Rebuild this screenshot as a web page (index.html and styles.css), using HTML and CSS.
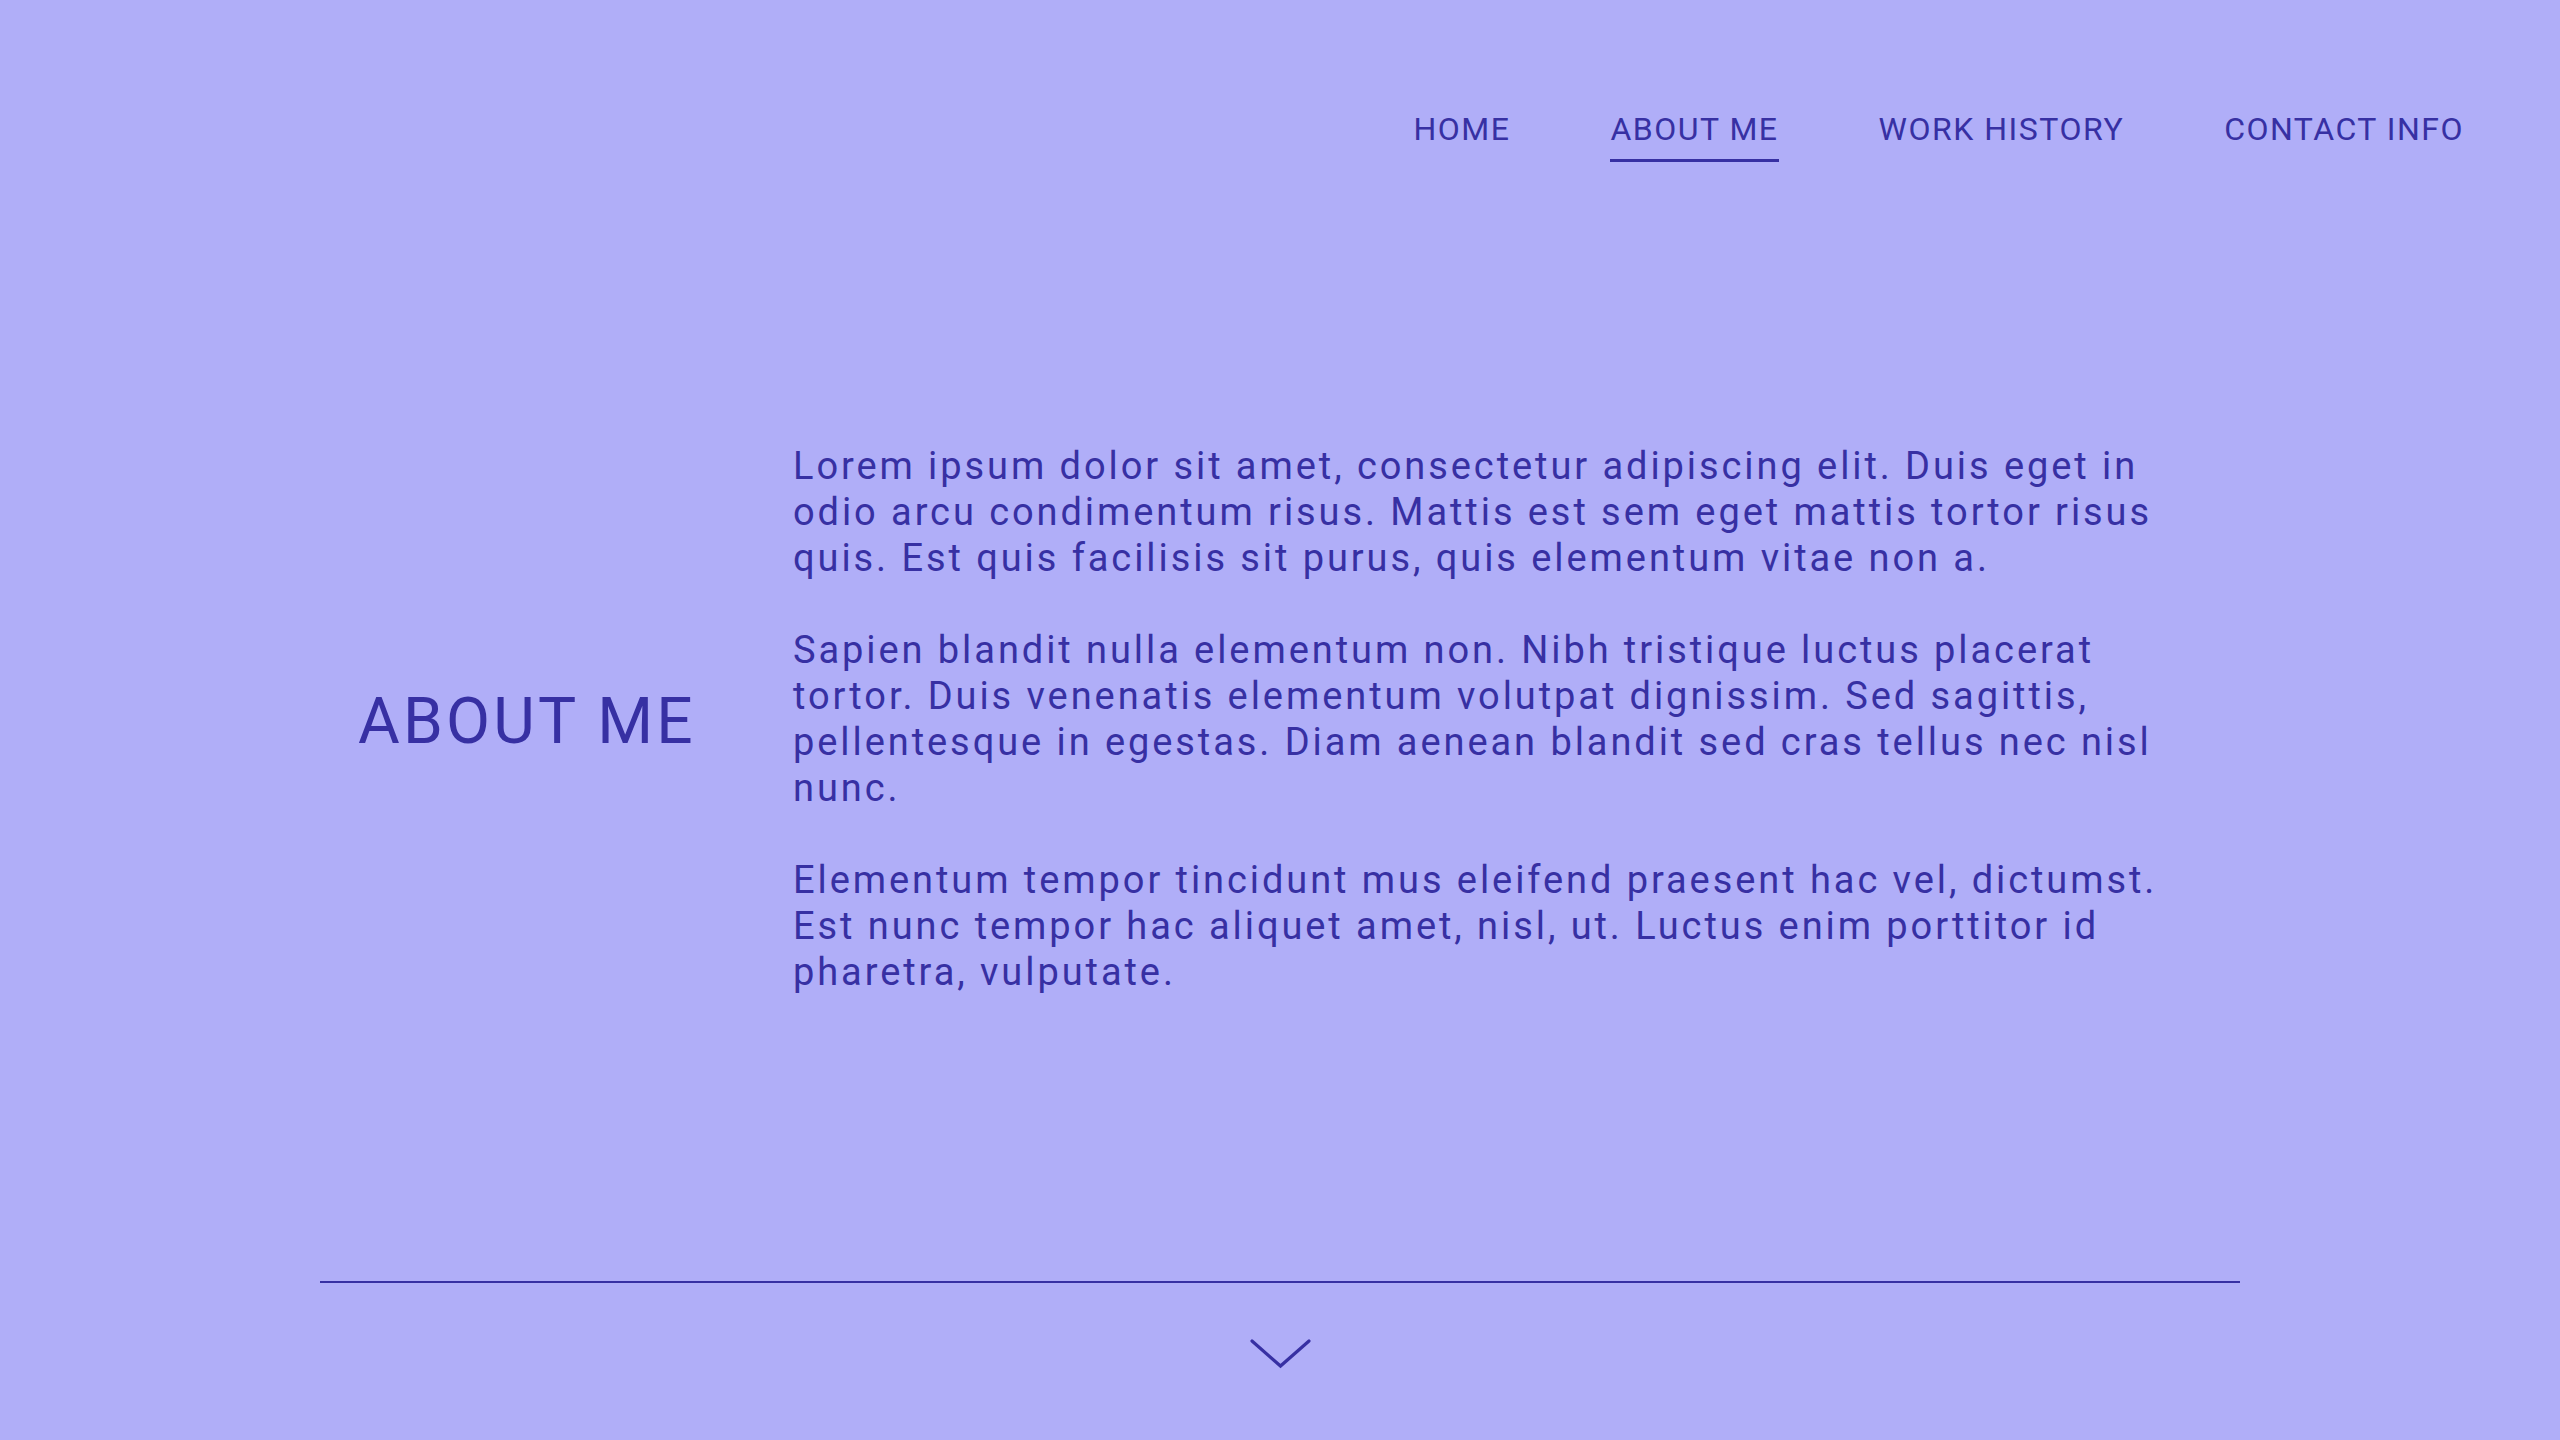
FILE: index.html
```html
<!DOCTYPE html>
<html lang="en">
<head>
<meta charset="utf-8">
<title>About Me</title>
<link rel="stylesheet" href="styles.css">
</head>
<body>
<div class="page">
  <header class="nav">
    <a class="nav-link" href="#">HOME</a>
    <a class="nav-link active" href="#">ABOUT ME</a>
    <a class="nav-link" href="#">WORK HISTORY</a>
    <a class="nav-link" href="#">CONTACT INFO</a>
  </header>
  <main class="about">
    <div class="about-inner">
      <h1 class="about-title">ABOUT ME</h1>
      <div class="about-text">
        <p>Lorem ipsum dolor sit amet, consectetur adipiscing elit. Duis eget in odio arcu condimentum risus. Mattis est sem eget mattis tortor risus quis. Est quis facilisis sit purus, quis elementum vitae non a.</p>
        <p>Sapien blandit nulla elementum non. Nibh tristique luctus placerat tortor. Duis venenatis elementum volutpat dignissim. Sed sagittis, pellentesque in egestas. Diam aenean blandit sed cras tellus nec nisl nunc.</p>
        <p>Elementum tempor tincidunt mus eleifend praesent hac vel, dictumst. Est nunc tempor hac aliquet amet, nisl, ut. Luctus enim porttitor id pharetra, vulputate.</p>
      </div>
    </div>
  </main>
  <footer class="footer">
    <hr class="divider">
    <a class="scroll-down" href="#" aria-label="Scroll down">
      <svg width="61" height="30" viewBox="0 0 61 30" fill="none" stroke="currentColor" stroke-width="3.2" stroke-linecap="round" stroke-linejoin="miter">
        <path d="M2 2 L30.5 27 L59 2"/>
      </svg>
    </a>
  </footer>
</div>
</body>
</html>
```
FILE: styles.css
```css
html, body {
  margin: 0;
  padding: 0;
}
body {
  background: #b0aef8;
  color: #3730a3;
  font-family: Roboto, "Noto Sans", sans-serif;
}
.page {
  height: 1440px;
  display: flex;
  flex-direction: column;
}
.nav {
  display: flex;
  justify-content: flex-end;
  gap: 100px;
  padding: 110px 96px 0 0;
  height: 52px;
}
.nav-link {
  color: #3730a3;
  text-decoration: none;
  font-size: 32px;
  line-height: 38px;
  letter-spacing: 0.047em;
  padding-bottom: 11px;
  border-bottom: 3px solid transparent;
  align-self: flex-start;
}
.nav-link.active {
  border-bottom-color: #3730a3;
}
.about {
  flex: 1;
  display: flex;
  align-items: center;
  padding-bottom: 6px;
}
.about-inner {
  width: 1844px;
  margin: 0 auto;
  display: flex;
  align-items: center;
}
.about-title {
  flex: 0 0 435px;
  margin: 0;
  padding-top: 6px;
  font-size: 64px;
  font-weight: 400;
  letter-spacing: 0.05em;
  line-height: 75px;
}
.about-text {
  flex: 1;
}
.about-text p {
  margin: 0 0 46px;
  font-size: 38px;
  line-height: 46px;
  letter-spacing: 0.077em;
}
.about-text p:last-child {
  margin-bottom: 0;
}
.footer {
  height: 159px;
  display: flex;
  flex-direction: column;
  align-items: center;
}
.divider {
  align-self: stretch;
  margin: 0 320px;
  border: 0;
  height: 2px;
  background: #3730a3;
}
.scroll-down {
  color: #3730a3;
  margin-top: 56px;
  display: block;
  line-height: 0;
}
```
